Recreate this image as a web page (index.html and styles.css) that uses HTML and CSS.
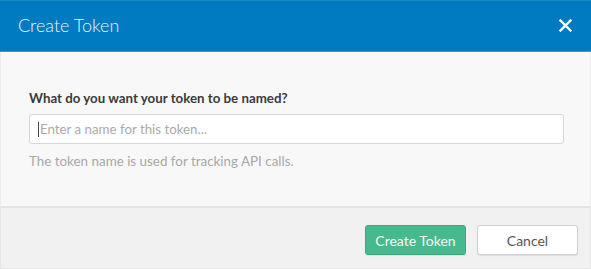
FILE: index.html
```html
<!DOCTYPE html>
<html lang="en">
<head>
	<meta charset="UTF-8">
	<title>Create Token</title>
<link rel="stylesheet" href="styles.css">
</head>
<body>
	<div class='modal'>
		<div class='modal-hd'>
			<div class='title'>Create Token</div>
			<div class='close'>
				<svg width="13" height="13" viewBox="0 0 13 13">
					<path d="M1.5 1.5 L11.5 11.5 M11.5 1.5 L1.5 11.5" stroke="#fff" stroke-width="2.4" stroke-linecap="square"/>
				</svg>
			</div>
		</div>
		<div class='modal-bd'>
			<label class='label'>What do you want your token to be named?</label>
			<div class='input'><span class='caret'></span>Enter a name for this token...</div>
			<div class='help'>The token name is used for tracking API calls.</div>
		</div>
		<div class='modal-ft'>
			<div class='btn btn-primary'>Create Token</div>
			<div class='btn'>Cancel</div>
		</div>
	</div>
</body>
</html>
```

FILE: styles.css
```css
body{
	margin:0;
	font-family: Lato, "Open Sans", sans-serif;
	background-color:#fff;
}
.modal{
	width:591px;
	height:269px;
	box-sizing:border-box;
	display:flex;
	flex-direction:column;
}
.modal-hd{
	height:50px;
	background-color:#007bc1;
	border-top:1px solid #1a86c6;
	border-bottom:1px solid #3d98d0;
	display:flex;
	align-items:center;
	justify-content:space-between;
	padding:0 19px 0 18px;
}
.modal-hd .title{
	color:#eaf4fb;
	font-size:18px;
	font-weight:300;
	padding-bottom:2px;
}
.modal-hd .close{
	display:flex;
	padding-bottom:2px;
}
.modal-bd{
	background-color:#f8f8f8;
	border-left:1px solid #ececec;
	border-right:1px solid #ececec;
	padding:38px 26px 0 28px;
	height:156px;
	box-sizing:border-box;
	border-bottom:2px solid #e4e4e4;
}
.label{
	display:block;
	font-size:13.3px;
	font-weight:bold;
	color:#3a3a3a;
}
.input{
	margin-top:8px;
	height:30px;
	box-sizing:border-box;
	background-color:#fff;
	border:1px solid #d6d6d6;
	border-radius:3px;
	display:flex;
	align-items:center;
	padding-left:8px;
	font-size:13.3px;
	color:#aaa;
}
.caret{
	width:1px;
	height:15px;
	background-color:#444;
	margin-right:1px;
}
.help{
	margin-top:9px;
	font-size:13.4px;
	color:#a8a8a8;
}
.modal-ft{
	flex:1;
	background-color:#f1f1f1;
	border-left:1px solid #e6e6e6;
	border-right:1px solid #e6e6e6;
	border-bottom:1px solid #e6e6e6;
	display:flex;
	justify-content:flex-end;
	align-items:flex-start;
	gap:11px;
	padding:17px 12px 0 0;
}
.btn{
	width:101px;
	height:30px;
	box-sizing:border-box;
	border:1px solid #cfcfcf;
	border-radius:3px;
	background-color:#fff;
	color:#555;
	font-size:14px;
	display:flex;
	align-items:center;
	justify-content:center;
	box-shadow:0 1px 1px rgba(0,0,0,.08);
}
.btn-primary{
	background-color:#46b98e;
	border-color:#3ea77f;
	color:#f4fbf8;
}
```
